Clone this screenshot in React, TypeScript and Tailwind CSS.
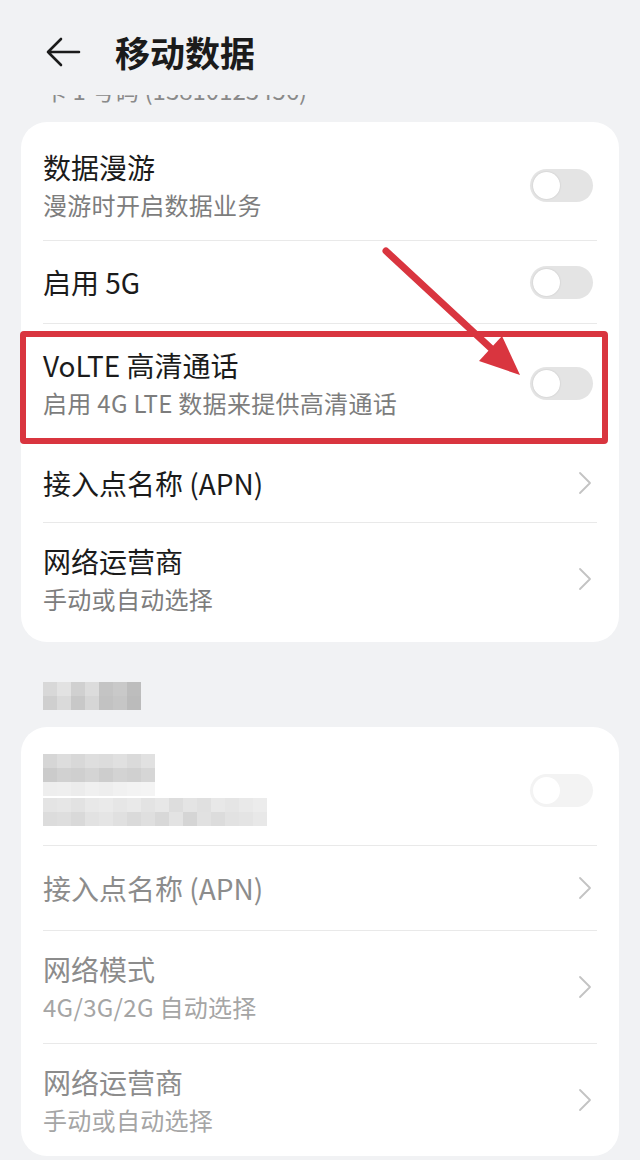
import React from 'react';

const FONT = { fontFamily: '"Noto Sans CJK SC", "Noto Sans", sans-serif' };

// mosaic shades for the pixelated (hidden) text
const SECTION_CELLS = [
  ['#d8d8d8', '#e2e2e2', '#d0d0d0', '#dcdcdc', '#c4c4c4', '#c9c9c9', '#bdbdbd'],
  ['#cfcfcf', '#dadada', '#c8c8c8', '#d6d6d6', '#c2c2c2', '#c6c6c6', '#bbbbbb'],
];
const TITLE_CELLS = [
  ['#d6d6d6', '#dddddd', '#d8d8d8', '#dedede', '#dcdcdc', '#e0e0e0', '#dadada', '#e1e1e1'],
  ['#cbcbcb', '#d1d1d1', '#cfcfcf', '#d4d4d4', '#cdcdcd', '#d3d3d3', '#d0d0d0', '#d6d6d6'],
  ['#eeeeee', '#efefef', '#ececec', '#f0f0f0', '#eeeeee', '#f1f1f1', '#f3f3f3', '#f4f4f4'],
];
const SUB_CELLS = [
  ['#e4e4e4', '#e6e6e6', '#e2e2e2', '#e8e8e8', '#eaeaea', '#e6e6e6', '#e9e9e9', '#e3e3e3', '#e7e7e7', '#dddddd', '#e4e4e4', '#e0e0e0', '#e8e8e8', '#e5e5e5', '#e9e9e9', '#ececec'],
  ['#dcdcdc', '#dedede', '#d9d9d9', '#e2e2e2', '#e5e5e5', '#e0e0e0', '#dadada', '#dfdfdf', '#d8d8d8', '#e3e3e3', '#d5d5d5', '#e1e1e1', '#dcdcdc', '#e2e2e2', '#e4e4e4', '#e8e8e8'],
];

function Mosaic({ cells }: { cells: string[][] }) {
  return (
    <div className="flex flex-col">
      {cells.map((row, i) => (
        <div key={i} className="flex">
          {row.map((c, j) => (
            <div key={j} className="h-[14px] w-[14px]" style={{ backgroundColor: c }} />
          ))}
        </div>
      ))}
    </div>
  );
}

function Toggle({ faded }: { faded?: boolean }) {
  return (
    <div
      className={`relative mr-[4px] h-[33px] w-[63px] rounded-full ${faded ? 'bg-[#f3f3f3]' : 'bg-[#e4e4e4]'}`}
    >
      <div
        className={`absolute left-[3px] top-[3px] h-[27px] w-[27px] rounded-full bg-white ${
          faded ? '' : 'shadow-[0_0_2px_rgba(0,0,0,0.15)]'
        }`}
      />
    </div>
  );
}

function Chevron() {
  return (
    <svg width="14" height="24" viewBox="0 0 14 24" fill="none">
      <path d="M2 2 L12 12 L2 22" stroke="#c3c3c3" strokeWidth="1.8" strokeLinecap="round" strokeLinejoin="round" />
    </svg>
  );
}

type RowProps = {
  title?: string;
  sub?: string;
  right: 'toggle' | 'chevron' | 'faded-toggle';
  h: string;
  muted?: boolean;
};

function Row({ title, sub, right, h, muted }: RowProps) {
  return (
    <div className={`flex items-center justify-between ${h}`}>
      <div className="flex flex-col gap-[4px]">
        {title && (
          <div className={`text-[28px] leading-[36px] ${muted ? 'text-[#8c8c8c]' : 'text-[#1b1b1b]'}`}>{title}</div>
        )}
        {sub && (
          <div
            className={`text-[24px] leading-[32px] tracking-[0.3px] ${muted ? 'text-[#a5a5a5]' : 'text-[#7d7d7d]'}`}
          >
            {sub}
          </div>
        )}
      </div>
      <div className="flex items-center">
        {right === 'toggle' && <Toggle />}
        {right === 'faded-toggle' && <Toggle faded />}
        {right === 'chevron' && (
          <div className="pr-[5px]">
            <Chevron />
          </div>
        )}
      </div>
    </div>
  );
}

const Divider = () => <div className="h-px bg-[#e9e9e9]" />;

export default function App() {
  return (
    <div className="relative min-h-[1160px] w-[640px] overflow-hidden bg-[#f1f2f4]" style={FONT}>
      {/* header */}
      <div className="mt-[30px] flex h-[44px] items-center gap-[34px] px-[45px]">
        <svg width="36" height="32" viewBox="0 0 36 32" fill="none">
          <path d="M34 16 H3 M16 3 L3 16 L16 29" stroke="#1b1b1b" strokeWidth="2.6" strokeLinecap="round" strokeLinejoin="round" />
        </svg>
        <div className="text-[35px] font-semibold leading-[44px] text-[#1b1b1b]">移动数据</div>
      </div>

      {/* clipped line scrolled under the header */}
      <div className="mt-[21px] h-[11px] overflow-hidden px-[43px]">
        <div className="-mt-[21px] text-[24px] leading-[32px] text-[#8a8a8a]">卡 1 号码 (13810123456)</div>
      </div>

      {/* card 1 */}
      <div className="mx-[21px] mt-[16px] rounded-[26px] bg-white px-[22px] py-2">
        <Row title="数据漫游" sub="漫游时开启数据业务" right="toggle" h="h-[110px]" />
        <Divider />
        <Row title="启用 5G" right="toggle" h="h-[82px]" />
        <Divider />
        <Row title="VoLTE 高清通话" sub="启用 4G LTE 数据来提供高清通话" right="toggle" h="h-[118px]" />
        <Divider />
        <Row title="接入点名称 (APN)" right="chevron" h="h-[79px]" />
        <Divider />
        <Row title="网络运营商" sub="手动或自动选择" right="chevron" h="h-[111px]" />
      </div>

      {/* section header (pixelated) */}
      <div className="mt-[40px] px-[43px]">
        <Mosaic cells={SECTION_CELLS} />
      </div>

      {/* card 2 */}
      <div className="mx-[21px] mt-[17px] rounded-[26px] bg-white px-[22px] pt-2">
        <div className="flex h-[110px] items-center justify-between">
          <div className="flex flex-col gap-[2px]">
            <Mosaic cells={TITLE_CELLS} />
            <Mosaic cells={SUB_CELLS} />
          </div>
          <Toggle faded />
        </div>
        <Divider />
        <Row title="接入点名称 (APN)" right="chevron" h="h-[84px]" muted />
        <Divider />
        <Row title="网络模式" sub="4G/3G/2G 自动选择" right="chevron" h="h-[112px]" muted />
        <Divider />
        <Row title="网络运营商" sub="手动或自动选择" right="chevron" h="h-[112px]" muted />
      </div>

      {/* annotation: red box */}
      <div className="pointer-events-none absolute left-[20px] top-[331px] h-[113px] w-[588px] rounded-[4px] border-[6px] border-[#d9353f]" />

      {/* annotation: red arrow */}
      <svg className="pointer-events-none absolute left-0 top-0" width="640" height="1160" viewBox="0 0 640 1160">
        <line x1="386" y1="251" x2="496" y2="353" stroke="#d9353f" strokeWidth="7" strokeLinecap="round" />
        <polygon points="520,375 479,361 502,336" fill="#d9353f" />
      </svg>
    </div>
  );
}
